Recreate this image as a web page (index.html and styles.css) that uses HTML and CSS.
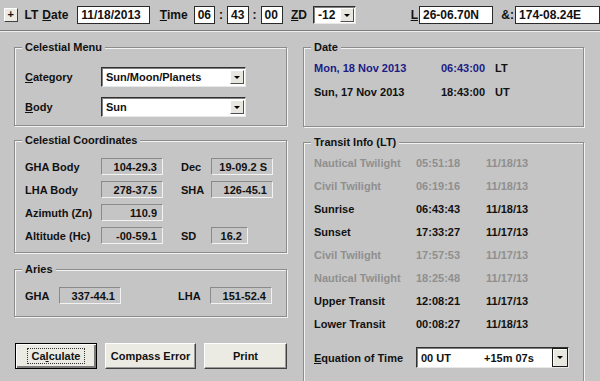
FILE: index.html
```html
<!DOCTYPE html>
<html lang="en">
<head>
  <meta charset="UTF-8" />
  <title>Celestial</title>
  <link rel="stylesheet" href="styles.css">
</head>
<body>
  <!-- top toolbar -->
  <div class="toolbar">
    <span class="plus">+</span>
    <span class="lbl lt">LT</span>
    <span class="lbl date-lbl"><u>D</u>ate</span>
    <span class="field f-date">11/18/2013</span>
    <span class="lbl time-lbl"><u>T</u>ime</span>
    <span class="field f-hh">06</span>
    <span class="colon">:</span>
    <span class="field f-mm">43</span>
    <span class="colon">:</span>
    <span class="field f-ss">00</span>
    <span class="lbl zd-lbl"><u>Z</u>D</span>
    <span class="combo f-zd"><span class="combo-text">-12</span><span class="arrow"></span></span>
    <span class="lbl l-lbl"><u>L</u></span>
    <span class="field f-lat">26-06.70N</span>
    <span class="lbl amp-lbl">&amp;:</span>
    <span class="field f-lon">174-08.24E</span>
  </div>

  <div class="main">
    <div class="col-left">
      <fieldset class="group menu">
        <legend>Celestial Menu</legend>
        <div class="menu-row">
          <span class="lbl"><u>C</u>ategory</span>
          <span class="combo wide"><span class="combo-text">Sun/Moon/Planets</span><span class="arrow"></span></span>
        </div>
        <div class="menu-row">
          <span class="lbl"><u>B</u>ody</span>
          <span class="combo wide"><span class="combo-text">Sun</span><span class="arrow"></span></span>
        </div>
      </fieldset>

      <fieldset class="group coords">
        <legend>Celestial Coordinates</legend>
        <div class="coord-grid">
          <span class="lbl">GHA Body</span><span class="val">104-29.3</span>
          <span class="lbl lbl2">Dec</span><span class="val">19-09.2 S</span>
          <span class="lbl">LHA Body</span><span class="val">278-37.5</span>
          <span class="lbl lbl2">SHA</span><span class="val">126-45.1</span>
          <span class="lbl">Azimuth (Zn)</span><span class="val">110.9</span>
          <span></span><span></span>
          <span class="lbl">Altitude (Hc)</span><span class="val">-00-59.1</span>
          <span class="lbl lbl2">SD</span><span class="val short">16.2</span>
        </div>
      </fieldset>

      <fieldset class="group aries">
        <legend>Aries</legend>
        <div class="aries-row">
          <span class="lbl">GHA</span><span class="val">337-44.1</span>
          <span class="lbl lha">LHA</span><span class="val lha-val">151-52.4</span>
        </div>
      </fieldset>

      <div class="buttons">
        <button class="btn calc"><span>Ca<u>l</u>culate</span></button>
        <button class="btn compass">Compass Error</button>
        <button class="btn print">Print</button>
      </div>
    </div>

    <div class="col-right">
      <fieldset class="group datebox">
        <legend>Date</legend>
        <div class="date-row blue"><span>Mon, 18 Nov 2013</span><span>06:43:00</span><span>LT</span></div>
        <div class="date-row"><span>Sun, 17 Nov 2013</span><span>18:43:00</span><span>UT</span></div>
      </fieldset>

      <fieldset class="group transit">
        <legend>Transit Info (LT)</legend>
        <div class="t-row dim"><span>Nautical Twilight</span><span>05:51:18</span><span>11/18/13</span></div>
        <div class="t-row dim"><span>Civil Twilight</span><span>06:19:16</span><span>11/18/13</span></div>
        <div class="t-row"><span>Sunrise</span><span>06:43:43</span><span>11/18/13</span></div>
        <div class="t-row"><span>Sunset</span><span>17:33:27</span><span>11/17/13</span></div>
        <div class="t-row dim"><span>Civil Twilight</span><span>17:57:53</span><span>11/17/13</span></div>
        <div class="t-row dim"><span>Nautical Twilight</span><span>18:25:48</span><span>11/17/13</span></div>
        <div class="t-row"><span>Upper Transit</span><span>12:08:21</span><span>11/17/13</span></div>
        <div class="t-row"><span>Lower Transit</span><span>00:08:27</span><span>11/18/13</span></div>
        <div class="eot-row">
          <span class="lbl"><u>E</u>quation of Time</span>
          <span class="combo eot"><span class="combo-text"><span class="eot-ut">00 UT</span><span>+15m 07s</span></span><span class="arrow"></span></span>
        </div>
      </fieldset>
    </div>
  </div>
</body>
</html>
```

FILE: styles.css
```css
body {
  margin: 0;
  width: 600px;
  height: 381px;
  overflow: hidden;
  background: #c5c5c5;
  font-family: "Liberation Sans", Arial, sans-serif;
  font-size: 11px;
  font-weight: bold;
  color: #111;
}
u {
  text-decoration: underline;
  text-underline-offset: 1px;
}

/* toolbar */
.toolbar {
  display: flex;
  align-items: center;
  height: 30px;
  border-bottom: 1px solid #7a7a7a;
  box-shadow: 0 1px 0 #eee;
  font-size: 12px;
}
.plus {
  margin-left: 4px;
  width: 12px;
  height: 12px;
  line-height: 11px;
  text-align: center;
  background: #ecebe3;
  border: 1px solid;
  border-color: #fff #404040 #404040 #fff;
  font-size: 11px;
}
.lt { margin-left: 7px; }
.date-lbl { margin-left: 4px; }
.field {
  height: 16px;
  line-height: 16px;
  background: #fff;
  border: 1px solid #2a2a2a;
  padding: 0 3px;
  box-sizing: content-box;
}
.f-date { margin-left: 9px; width: 67px; }
.time-lbl { margin-left: 10px; }
.f-hh { margin-left: 6px; width: 14px; }
.colon { margin: 0 4px; }
.f-mm { width: 14px; }
.f-ss { width: 15px; }
.zd-lbl { margin-left: 8px; }
.f-zd { margin-left: 6px; width: 44px; height: 18px; }
.l-lbl { margin-left: 55px; }
.f-lat { margin-left: 1px; width: 69px; }
.amp-lbl { margin-left: 8px; }
.f-lon { margin-left: 1px; width: 80px; }

/* combos */
.combo {
  display: flex;
  align-items: center;
  box-sizing: border-box;
  background: #fff;
  border: 1px solid;
  border-color: #303030 #e8e8e8 #e8e8e8 #303030;
  box-shadow: inset 1px 1px 0 #808080;
  padding: 0 1px 0 4px;
}
.combo-text { flex: 1; }
.arrow {
  width: 14px;
  height: 14px;
  box-sizing: border-box;
  background: #e8e7df;
  border: 1px solid;
  border-color: #fff #505050 #505050 #fff;
  position: relative;
}
.arrow::after {
  content: "";
  position: absolute;
  left: 3px;
  top: 5px;
  border-left: 3px solid transparent;
  border-right: 3px solid transparent;
  border-top: 3px solid #000;
}

/* layout */
.main {
  display: grid;
  grid-template-columns: 273px 281px;
  column-gap: 16px;
  padding: 10px 0 0 14px;
}
.col-left, .col-right {
  display: flex;
  flex-direction: column;
}

.group {
  margin: 0;
  padding: 0 10px 8px;
  min-width: 0;
  border: 1px solid #8c8c8c;
  box-shadow: 1px 1px 0 #f2f2f2, inset 1px 1px 0 #f2f2f2;
}
.group legend {
  margin-left: -3px;
  padding: 0 3px;
  line-height: 13px;
  background: #c5c5c5;
}

.menu { padding-top: 13px; }
.menu-row {
  display: flex;
  align-items: center;
  height: 20px;
}
.menu-row + .menu-row { margin-top: 10px; }
.menu-row .lbl { width: 76px; }
.combo.wide { width: 145px; height: 20px; }

.coords { margin-top: 8px; padding-top: 11px; }
.coord-grid {
  display: grid;
  grid-template-columns: 76px 62px 48px 62px;
  grid-auto-rows: 17px;
  row-gap: 6px;
  align-items: center;
}
.lbl2 { padding-left: 18px; }
.val {
  height: 17px;
  line-height: 17px;
  box-sizing: border-box;
  text-align: right;
  padding-right: 5px;
  border: 1px solid;
  border-color: #8a8a8a #f2f2f2 #f2f2f2 #8a8a8a;
}
.val.short { width: 37px; }

.aries { margin-top: 10px; padding-top: 11px; padding-bottom: 12px; }
.aries-row {
  display: grid;
  grid-template-columns: 34px 62px 57px 32px 62px;
  height: 17px;
  align-items: center;
}
.lha { grid-column: 4; }

.buttons {
  display: flex;
  gap: 8px;
  margin: 26px 0 0 1px;
}
.btn {
  height: 26px;
  font: inherit;
  color: #111;
  background: #ecebe3;
  border: 1px solid;
  border-color: #fff #404040 #404040 #fff;
  box-shadow: inset -1px -1px 0 #9a9a9a;
  padding: 0;
}
.calc {
  width: 82px;
  border: 1px solid #000;
  box-shadow: inset 1px 1px 0 #fff, inset -2px -2px 0 #7a7a7a;
}
.calc span {
  padding: 1px 4px;
  outline: 1px dotted #333;
}
.compass { width: 91px; }
.print { width: 83px; }

/* right column */
.datebox {
  height: 86px;
  box-sizing: border-box;
  padding-top: 6px;
}
.date-row {
  display: grid;
  grid-template-columns: 127px 54px auto;
  height: 17px;
  line-height: 17px;
}
.date-row + .date-row { margin-top: 7px; }
.date-row.blue { color: #1c1c86; }
.date-row.blue span:last-child { color: #111; }

.transit {
  margin-top: 9px;
  padding-top: 6px;
  height: 260px;
  box-sizing: border-box;
}
.t-row {
  display: grid;
  grid-template-columns: 102px 70px auto;
  height: 17px;
  line-height: 17px;
}
.t-row + .t-row { margin-top: 6px; }
.t-row.dim { color: #8f8f8f; }
.eot-row {
  display: flex;
  align-items: center;
  margin-top: 14px;
}
.eot-row .lbl { width: 102px; }
.combo.eot { width: 153px; height: 21px; }
.combo.eot .arrow {
  width: 16px;
  height: 19px;
  border: 1px solid #1a1a1a;
  box-shadow: inset 1px 1px 0 #fff;
  margin-right: -1px;
}
.combo.eot .arrow::after { left: 4px; top: 7px; }
.eot-ut { display: inline-block; width: 63px; }
```
